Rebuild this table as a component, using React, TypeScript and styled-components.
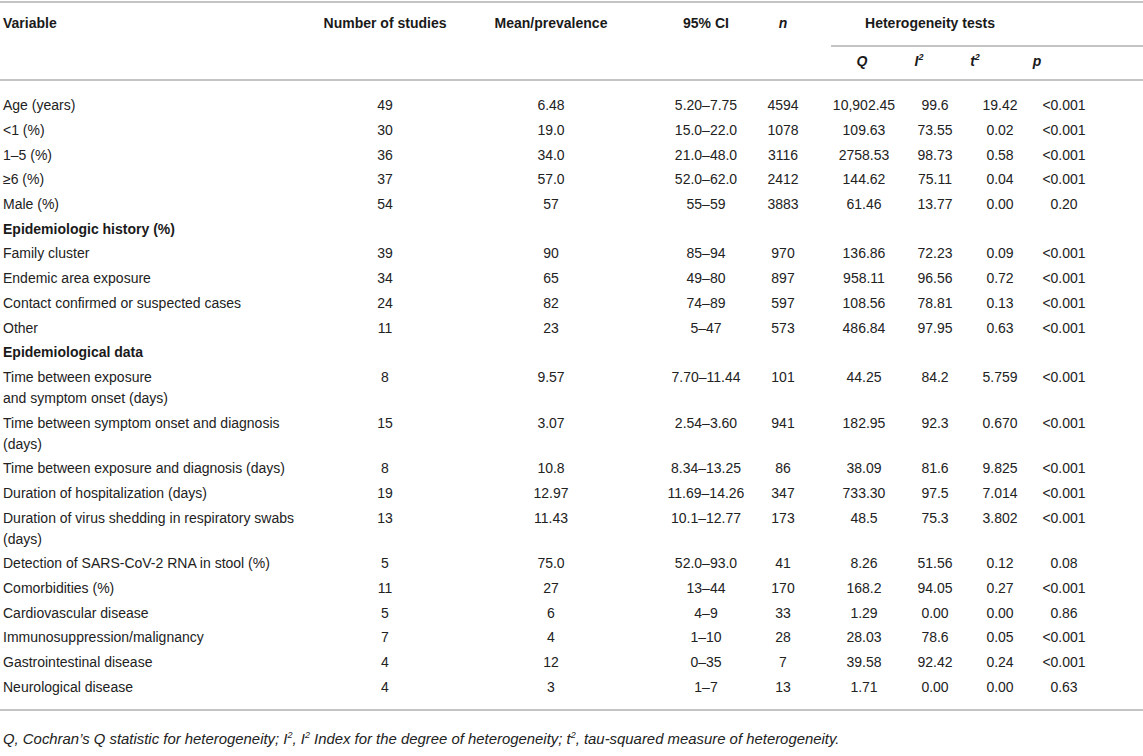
import React from 'react';
import styled, { createGlobalStyle } from 'styled-components';

const GlobalStyle = createGlobalStyle`
  html, body { margin: 0; padding: 0; background: #ffffff; }
  body {
    font-family: "Liberation Sans", Arial, Helvetica, sans-serif;
    color: #222222;
    -webkit-font-smoothing: antialiased;
  }
`;

const COLS = '302px 166px 166px 126px 53px 102px 40px 80px 58px 1fr';
const RULE = '#c4c4c4';

const Page = styled.div`
  width: 1143px;
  padding-top: 1px;
`;

const Table = styled.div`
  border-top: 2px solid ${RULE};
  border-bottom: 2px solid ${RULE};
`;

const columnOffsets = `
  > :nth-child(4) { padding-left: 18px; }
  > :nth-child(5) { padding-right: 7px; }
  > :nth-child(8) { padding-left: 10px; }
`;

const HeadRow = styled.div`
  display: grid;
  grid-template-columns: ${COLS};
  align-items: start;
  height: 76px;
  border-bottom: 2px solid ${RULE};
  font-size: 14px;
  font-weight: bold;
  line-height: 17px;
  color: #1a1a1a;
  ${columnOffsets}
`;

const HeadCell = styled.div<{ $left?: boolean }>`
  padding-top: 12px;
  padding-left: ${(p) => (p.$left ? '3px' : '0')};
  text-align: ${(p) => (p.$left ? 'left' : 'center')};
`;

const Ital = styled.span`
  font-style: italic;
`;

const Sup = styled.sup`
  font-size: 9px;
  line-height: 0;
  vertical-align: baseline;
  position: relative;
  top: -6px;
`;

const HeteroGroup = styled.div`
  grid-column: 6 / -1;
  padding-top: 12px;
`;

const HeteroTitle = styled.div`
  width: 234px;
  text-align: center;
`;

const HeteroRule = styled.div`
  margin: 13px 0 0 18px;
  border-top: 2px solid ${RULE};
`;

const HeteroLabels = styled.div`
  display: grid;
  grid-template-columns: 98px 16px 96px 28px 1fr;
  margin-top: 6px;
  text-align: center;
  font-style: italic;
`;

const Body = styled.div`
  padding: 12.5px 0 9.5px;
`;

const Row = styled.div<{ $section?: boolean }>`
  display: grid;
  grid-template-columns: ${COLS};
  align-items: start;
  padding: 1.85px 0;
  font-size: 14px;
  line-height: 21px;
  font-weight: ${(p) => (p.$section ? 'bold' : 'normal')};
  color: ${(p) => (p.$section ? '#1a1a1a' : '#222222')};
  ${columnOffsets}
`;

const LabelCell = styled.div<{ $span?: boolean }>`
  padding-left: 3px;
  text-align: left;
  grid-column: ${(p) => (p.$span ? '1 / -1' : 'auto')};
`;

const ValueCell = styled.div`
  text-align: center;
  white-space: nowrap;
`;

const Footnote = styled.p`
  margin: 20px 0 0;
  padding-left: 3px;
  font-size: 14.9px;
  line-height: 17px;
  font-style: italic;
  color: #222222;
`;

type DataRow = { label: React.ReactNode; values: string[] };
type Item = DataRow | { section: string };

const items: Item[] = [
  { label: 'Age (years)', values: ['49', '6.48', '5.20–7.75', '4594', '10,902.45', '99.6', '19.42', '<0.001'] },
  { label: '<1 (%)', values: ['30', '19.0', '15.0–22.0', '1078', '109.63', '73.55', '0.02', '<0.001'] },
  { label: '1–5 (%)', values: ['36', '34.0', '21.0–48.0', '3116', '2758.53', '98.73', '0.58', '<0.001'] },
  { label: '≥6 (%)', values: ['37', '57.0', '52.0–62.0', '2412', '144.62', '75.11', '0.04', '<0.001'] },
  { label: 'Male (%)', values: ['54', '57', '55–59', '3883', '61.46', '13.77', '0.00', '0.20'] },
  { section: 'Epidemiologic history (%)' },
  { label: 'Family cluster', values: ['39', '90', '85–94', '970', '136.86', '72.23', '0.09', '<0.001'] },
  { label: 'Endemic area exposure', values: ['34', '65', '49–80', '897', '958.11', '96.56', '0.72', '<0.001'] },
  { label: 'Contact confirmed or suspected cases', values: ['24', '82', '74–89', '597', '108.56', '78.81', '0.13', '<0.001'] },
  { label: 'Other', values: ['11', '23', '5–47', '573', '486.84', '97.95', '0.63', '<0.001'] },
  { section: 'Epidemiological data' },
  {
    label: (
      <>
        Time between exposure
        <br />
        and symptom onset (days)
      </>
    ),
    values: ['8', '9.57', '7.70–11.44', '101', '44.25', '84.2', '5.759', '<0.001'],
  },
  { label: 'Time between symptom onset and diagnosis (days)', values: ['15', '3.07', '2.54–3.60', '941', '182.95', '92.3', '0.670', '<0.001'] },
  { label: 'Time between exposure and diagnosis (days)', values: ['8', '10.8', '8.34–13.25', '86', '38.09', '81.6', '9.825', '<0.001'] },
  { label: 'Duration of hospitalization (days)', values: ['19', '12.97', '11.69–14.26', '347', '733.30', '97.5', '7.014', '<0.001'] },
  { label: 'Duration of virus shedding in respiratory swabs (days)', values: ['13', '11.43', '10.1–12.77', '173', '48.5', '75.3', '3.802', '<0.001'] },
  { label: 'Detection of SARS-CoV-2 RNA in stool (%)', values: ['5', '75.0', '52.0–93.0', '41', '8.26', '51.56', '0.12', '0.08'] },
  { label: 'Comorbidities (%)', values: ['11', '27', '13–44', '170', '168.2', '94.05', '0.27', '<0.001'] },
  { label: 'Cardiovascular disease', values: ['5', '6', '4–9', '33', '1.29', '0.00', '0.00', '0.86'] },
  { label: 'Immunosuppression/malignancy', values: ['7', '4', '1–10', '28', '28.03', '78.6', '0.05', '<0.001'] },
  { label: 'Gastrointestinal disease', values: ['4', '12', '0–35', '7', '39.58', '92.42', '0.24', '<0.001'] },
  { label: 'Neurological disease', values: ['4', '3', '1–7', '13', '1.71', '0.00', '0.00', '0.63'] },
];

export default function App() {
  return (
    <Page>
      <GlobalStyle />
      <Table>
        <HeadRow>
          <HeadCell $left>Variable</HeadCell>
          <HeadCell>Number of studies</HeadCell>
          <HeadCell>Mean/prevalence</HeadCell>
          <HeadCell>95% CI</HeadCell>
          <HeadCell>
            <Ital>n</Ital>
          </HeadCell>
          <HeteroGroup>
            <HeteroTitle>Heterogeneity tests</HeteroTitle>
            <HeteroRule />
            <HeteroLabels>
              <span>Q</span>
              <span>
                I<Sup>2</Sup>
              </span>
              <span>
                t<Sup>2</Sup>
              </span>
              <span>p</span>
            </HeteroLabels>
          </HeteroGroup>
        </HeadRow>
        <Body>
          {items.map((item, i) =>
            'section' in item ? (
              <Row key={i} $section>
                <LabelCell $span>{item.section}</LabelCell>
              </Row>
            ) : (
              <Row key={i}>
                <LabelCell>{item.label}</LabelCell>
                {item.values.map((v, j) => (
                  <ValueCell key={j}>{v}</ValueCell>
                ))}
              </Row>
            )
          )}
        </Body>
      </Table>
      <Footnote>
        Q, Cochran’s Q statistic for heterogeneity; I<Sup>2</Sup>, I<Sup>2</Sup> Index for the degree of
        heterogeneity; t<Sup>2</Sup>, tau-squared measure of heterogeneity.
      </Footnote>
    </Page>
  );
}
